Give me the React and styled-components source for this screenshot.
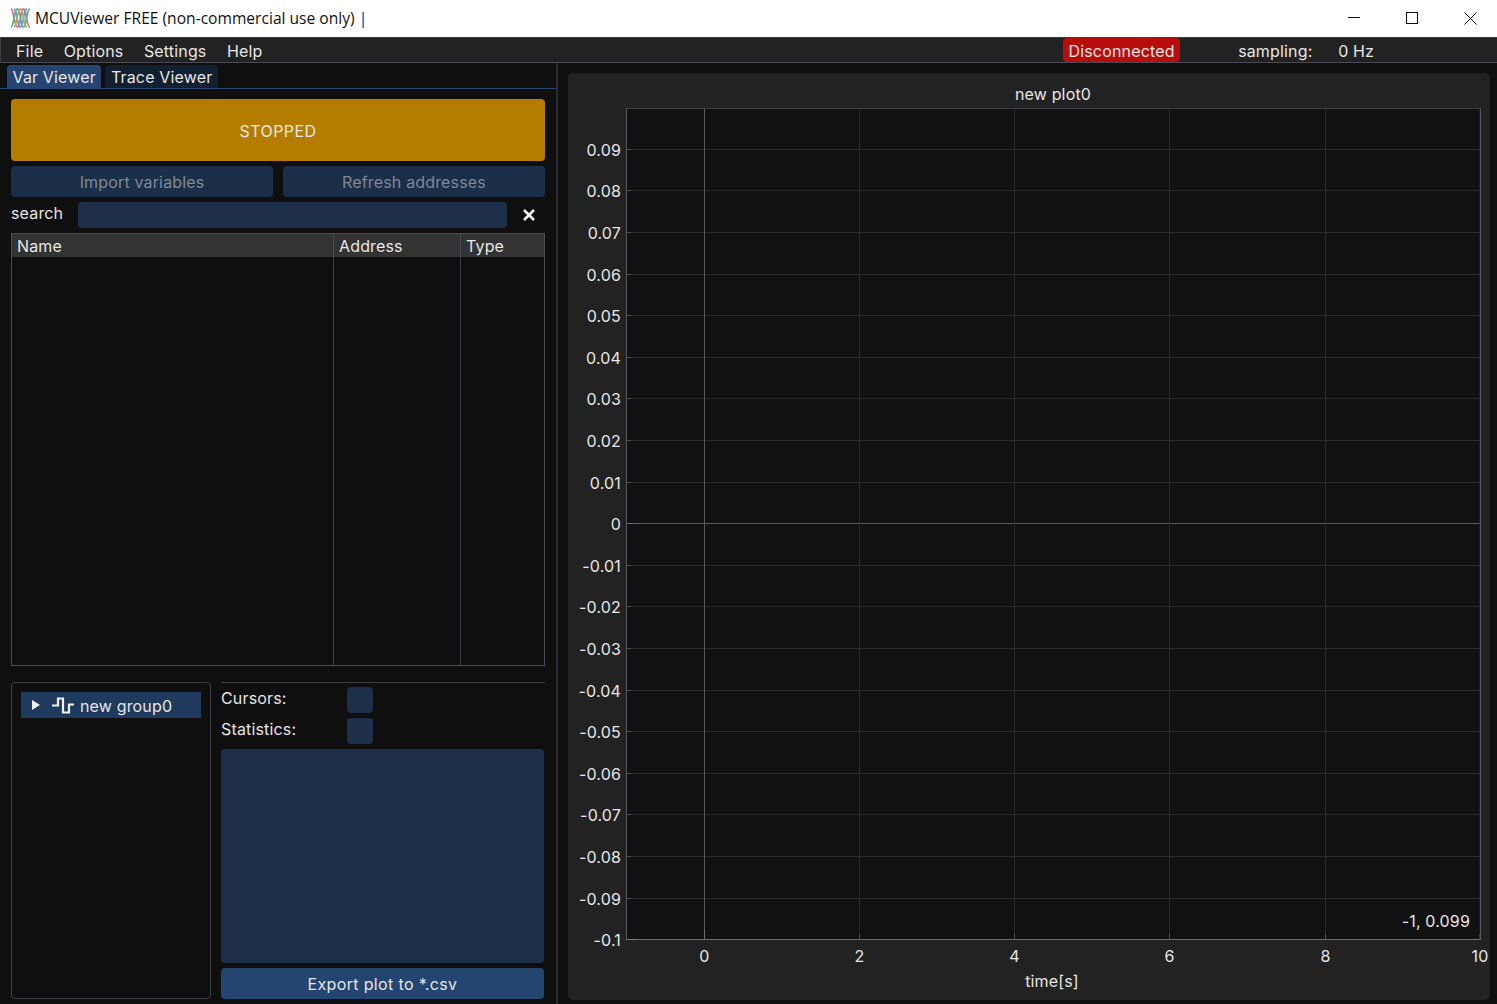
import React from "react";
import styled, { createGlobalStyle } from "styled-components";

const GlobalStyle = createGlobalStyle`
  html, body {
    margin: 0;
    padding: 0;
    background: #0f0f0f;
    overflow: hidden;
  }
  * { box-sizing: border-box; }
`;

const Window = styled.div`
  width: 1497px;
  height: 1004px;
  display: flex;
  flex-direction: column;
  overflow: hidden;
  font-family: Inter, "Liberation Sans", sans-serif;
  font-size: 16px;
  letter-spacing: 0.16px;
  color: #e6e6e6;
  background: #0f0f0f;
`;

const TitleBar = styled.div`
  height: 37px;
  flex: none;
  display: flex;
  align-items: center;
  background: #fff;
  padding: 0 0 1px 10px;
  color: #111;
  font-family: "Open Sans", "Liberation Sans", sans-serif;
  font-size: 15.6px;
  letter-spacing: 0;
`;

const AppTitle = styled.span`
  margin-left: 4px;
  flex: 1;
`;

const Caret = styled.span`
  color: #0f5fb0;
  font-weight: 600;
`;

const WinButton = styled.div`
  width: 58.5px;
  height: 36px;
  flex: none;
  display: flex;
  align-items: center;
  justify-content: center;
  position: relative;
  left: 3px;
`;

const MenuBar = styled.div`
  height: 26px;
  flex: none;
  display: flex;
  align-items: stretch;
  line-height: 26px;
  background: #222222;
  border-top: 1px solid #3d3d3d;
  border-bottom: 1px solid #4a4a52;
  border-left: 1px solid #3d3d3d;
  padding-left: 15px;
`;

const MenuItem = styled.span`
  margin-right: 20.5px;
`;

const Status = styled.span`
  margin-left: 780px;
  height: 24px;
  padding: 0 5.500px;
  border-radius: 4px;
  background: #b80d0d;
`;

const Sampling = styled.span`
  margin-left: 58px;
  width: 100px;
`;

const Body = styled.div`
  flex: 1;
  min-height: 0;
  display: flex;
`;

const LeftPanel = styled.div`
  width: 558px;
  flex: none;
  display: flex;
  flex-direction: column;
  border-right: 2px solid #2b2b2f;
`;

const Tabs = styled.div`
  height: 26px;
  flex: none;
  display: flex;
  align-items: flex-end;
  gap: 4px;
  padding-left: 7px;
  border-bottom: 1px solid #254570;
`;

const Tab = styled.div`
  height: 23px;
  line-height: 25px;
  padding: 0 5.500px;
  border-radius: 4px 4px 0 0;
  background: ${(p) => (p.$active ? "#254570" : "#13202f")};
`;

const LeftContent = styled.div`
  flex: 1;
  min-height: 0;
  display: flex;
  flex-direction: column;
  padding: 10px 11px 5px 11px;
`;

const RunButton = styled.div`
  height: 62px;
  flex: none;
  display: flex;
  align-items: center;
  justify-content: center;
  padding-top: 2px;
  letter-spacing: 0.4px;
  border-radius: 4px;
  background: #b57d00;
`;

const ButtonRow = styled.div`
  display: flex;
  gap: 10px;
  margin-top: 5px;
  flex: none;
`;

const DimButton = styled.div`
  flex: 1;
  height: 31px;
  display: flex;
  align-items: center;
  justify-content: center;
  border-radius: 4px;
  background: #1c2f48;
  color: #7f8894;
`;

const SearchRow = styled.div`
  display: flex;
  align-items: center;
  height: 26px;
  margin-top: 5px;
  flex: none;
`;

const SearchLabel = styled.span`
  width: 67px;
  flex: none;
  position: relative;
  top: -2px;
`;

const SearchInput = styled.div`
  width: 429px;
  flex: none;
  height: 26px;
  border-radius: 4px;
  background: #1e3049;
`;

const ClearButton = styled.div`
  width: 44px;
  flex: none;
  display: flex;
  justify-content: center;
`;

const VarTable = styled.div`
  height: 433px;
  margin-top: 5px;
  flex: none;
  display: grid;
  grid-template-columns: 322px 127px 1fr;
  grid-template-rows: 23px 1fr;
  border: 1px solid #4a4a52;
`;

const HeadCell = styled.div`
  background: #333333;
  padding-left: 5px;
  line-height: 24px;
  border-right: ${(p) => (p.$last ? "none" : "1px solid #4a4a52")};
`;

const ColCell = styled.div`
  border-right: ${(p) => (p.$last ? "none" : "1px solid #3a3a40")};
`;

const BottomRow = styled.div`
  flex: 1;
  min-height: 0;
  display: flex;
  gap: 10px;
  margin-top: 16px;
`;

const TreeBox = styled.div`
  width: 200px;
  flex: none;
  padding: 9px 9px;
  border: 1px solid #3d3d44;
  border-radius: 4px;
`;

const TreeRow = styled.div`
  height: 26px;
  display: flex;
  align-items: center;
  padding-left: 10px;
  background: #1f3a5c;
`;

const TreeLabel = styled.span`
  margin-left: 5px;
  position: relative;
  top: 1px;
`;

const SidePanel = styled.div`
  flex: 1;
  display: flex;
  flex-direction: column;
  border-top: 1px solid #3d3d44;
  padding-top: 4px;
`;

const OptionRow = styled.div`
  display: flex;
  align-items: center;
  height: 26px;
  margin-bottom: 5px;
  flex: none;
`;

const OptionLabel = styled.span`
  width: 126px;
  position: relative;
  top: -2px;
`;

const CheckBox = styled.div`
  width: 26px;
  height: 26px;
  border-radius: 4px;
  background: #1e3049;
`;

const NoteArea = styled.div`
  flex: 1;
  margin-right: 1px;
  border-radius: 4px;
  background: #1e3049;
`;

const ExportButton = styled.div`
  height: 31px;
  margin: 5px 1px 0 0;
  flex: none;
  display: flex;
  align-items: center;
  justify-content: center;
  letter-spacing: 0.35px;
  border-radius: 4px;
  background: #234570;
`;

const RightPanel = styled.div`
  flex: 1;
  padding: 10px 7px 4px 10px;
`;

const PlotCard = styled.div`
  height: 100%;
  border-radius: 5px;
  background: #222222;
  overflow: hidden;
`;

const PlotSvg = styled.svg`
  display: block;
  width: 100%;
  height: 100%;
  font-family: Inter, "Liberation Sans", sans-serif;
  font-size: 16px;
  letter-spacing: 0.16px;
  fill: #e6e6e6;
`;

const yTicks = [
  "0.09", "0.08", "0.07", "0.06", "0.05", "0.04", "0.03", "0.02", "0.01", "0",
  "-0.01", "-0.02", "-0.03", "-0.04", "-0.05", "-0.06", "-0.07", "-0.08", "-0.09",
];
const xTicks = [
  { label: "0", at: 704.5 },
  { label: "2", at: 859.5 },
  { label: "4", at: 1014.5 },
  { label: "6", at: 1169.5 },
  { label: "8", at: 1325.5 },
  { label: "10", at: 1480 },
];

const PLOT = { left: 626, right: 1480, top: 108, bottom: 939 };
const yPos = (i) => Math.floor(107.6 + (i + 1) * 41.6) + 0.5;

function AppLogo() {
  return (
    <svg width="21" height="20" viewBox="0 0 21 20" fill="none" strokeWidth="1.8">
      <path d="M1 1c3 0 3 18 6.500 18S10 1 13.500 1 16 19 20 19" stroke="#e0706e" />
      <path d="M1 19c3 0 3-18 6.500-18S10 19 13.500 19 16 1 20 1" stroke="#4fb58e" />
      <path d="M4 1c3 0 3 18 6.500 18S13 1 17 1" stroke="#6a94dc" />
      <path d="M4 19c3 0 3-18 6.500-18S13 19 17 19" stroke="#c9a25e" />
    </svg>
  );
}

function PulseIcon() {
  return (
    <svg width="24" height="17" viewBox="0 0 24 17" fill="none" stroke="#f0f0f0" strokeWidth="2.200">
      <path d="M1 8.500h6V1.500h5v14h6V7.500h5" />
    </svg>
  );
}

function Plot() {
  const { left, right, top, bottom } = PLOT;
  return (
    <PlotSvg viewBox="568 73 922 927">
      <rect x={left} y={top} width={right - left} height={bottom - top} fill="#111111" />
      {yTicks.map((label, i) => (
        <g key={label}>
          <line x1={left} x2={right} y1={yPos(i)} y2={yPos(i)} stroke={label === "0" ? "#5a5a5a" : "#2a2a2a"} />
          <line x1={left} x2={left + (label === "0" ? 10 : 5)} y1={yPos(i)} y2={yPos(i)} stroke={label === "0" ? "#6a6a6a" : "#4a4a4a"} />
          <text x="621" y={yPos(i) + 6} textAnchor="end">{label}</text>
        </g>
      ))}
      {xTicks.map(({ label, at }) => (
        <g key={label}>
          <line x1={at} x2={at} y1={top} y2={bottom} stroke={label === "0" ? "#5a5a5a" : "#2a2a2a"} />
          <line x1={at} x2={at} y1={bottom - (label === "0" ? 9 : 5)} y2={bottom} stroke={label === "0" ? "#707070" : "#505050"} />
          <text x={at} y="962" textAnchor="middle">{label}</text>
        </g>
      ))}
      <line x1={left} x2={right + 1} y1={top + 0.5} y2={top + 0.5} stroke="#3d3d44" />
      <line x1={left + 0.5} x2={left + 0.5} y1={top} y2={bottom} stroke="#55555c" />
      <line x1={right + 0.5} x2={right + 0.5} y1={top} y2={bottom} stroke="#55555c" />
      <line x1={left} x2={right + 1} y1={bottom + 0.5} y2={bottom + 0.5} stroke="#6a6a70" />
      <line x1={left} x2={left + 10} y1={bottom + 0.5} y2={bottom + 0.5} stroke="#7a7a7a" />
      <text x="621" y="946" textAnchor="end">-0.1</text>
      <text x="1053" y="100" textAnchor="middle">new plot0</text>
      <text x="1052" y="987" textAnchor="middle">time[s]</text>
      <text x="1470" y="927" textAnchor="end">-1, 0.099</text>
    </PlotSvg>
  );
}

export default function App() {
  return (
    <Window>
      <GlobalStyle />
      <TitleBar>
        <AppLogo />
        <AppTitle>
          MCUViewer FREE (non-commercial use only) <Caret>|</Caret>
        </AppTitle>
        <WinButton>
          <svg width="12" height="12" viewBox="0 0 12 12" stroke="#111" fill="none">
            <path d="M0 5.500h12" />
          </svg>
        </WinButton>
        <WinButton>
          <svg width="12" height="12" viewBox="0 0 12 12" stroke="#111" fill="none">
            <rect x="0.500" y="0.500" width="11" height="11" />
          </svg>
        </WinButton>
        <WinButton>
          <svg width="13" height="13" viewBox="0 0 13 13" stroke="#111" fill="none">
            <path d="M0.500 0.500l12 12M12.500 0.500l-12 12" />
          </svg>
        </WinButton>
      </TitleBar>
      <MenuBar>
        <MenuItem>File</MenuItem>
        <MenuItem>Options</MenuItem>
        <MenuItem>Settings</MenuItem>
        <MenuItem>Help</MenuItem>
        <Status>Disconnected</Status>
        <Sampling>sampling:</Sampling>
        <span>0 Hz</span>
      </MenuBar>
      <Body>
        <LeftPanel>
          <Tabs>
            <Tab $active>Var Viewer</Tab>
            <Tab>Trace Viewer</Tab>
          </Tabs>
          <LeftContent>
            <RunButton>STOPPED</RunButton>
            <ButtonRow>
              <DimButton>Import variables</DimButton>
              <DimButton>Refresh addresses</DimButton>
            </ButtonRow>
            <SearchRow>
              <SearchLabel>search</SearchLabel>
              <SearchInput />
              <ClearButton>
                <svg width="14" height="14" viewBox="0 0 14 14" stroke="#f2f2f2" strokeWidth="2.600" fill="none">
                  <path d="M2 2l10 10M12 2L2 12" />
                </svg>
              </ClearButton>
            </SearchRow>
            <VarTable>
              <HeadCell>Name</HeadCell>
              <HeadCell>Address</HeadCell>
              <HeadCell $last>Type</HeadCell>
              <ColCell />
              <ColCell />
              <ColCell $last />
            </VarTable>
            <BottomRow>
              <TreeBox>
                <TreeRow>
                  <svg width="20" height="12" viewBox="0 0 20 12" fill="#f0f0f0">
                    <path d="M1 1l8 5-8 5z" />
                  </svg>
                  <PulseIcon />
                  <TreeLabel>new group0</TreeLabel>
                </TreeRow>
              </TreeBox>
              <SidePanel>
                <OptionRow>
                  <OptionLabel>Cursors:</OptionLabel>
                  <CheckBox />
                </OptionRow>
                <OptionRow>
                  <OptionLabel>Statistics:</OptionLabel>
                  <CheckBox />
                </OptionRow>
                <NoteArea />
                <ExportButton>Export plot to *.csv</ExportButton>
              </SidePanel>
            </BottomRow>
          </LeftContent>
        </LeftPanel>
        <RightPanel>
          <PlotCard>
            <Plot />
          </PlotCard>
        </RightPanel>
      </Body>
    </Window>
  );
}
